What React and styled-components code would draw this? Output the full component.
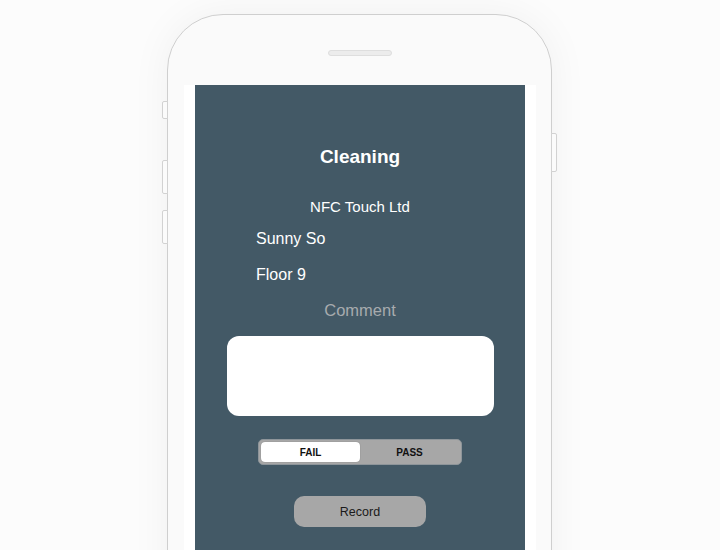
import React from "react";
import styled, { createGlobalStyle } from "styled-components";

const Global = createGlobalStyle`
  html, body { margin: 0; padding: 0; background: #fcfcfc; }
  body { font-family: "Liberation Sans", Arial, sans-serif; }
  * { box-sizing: border-box; }
`;

const Stage = styled.div`
  width: 720px;
  height: 550px;
  overflow: hidden;
  display: flex;
  justify-content: center;
  padding-top: 14px;
  background: #fcfcfc;
`;

const Phone = styled.div`
  position: relative;
  width: 385px;
  height: 800px;
  margin-left: -1px;
  flex-shrink: 0;
  background: #fafafa;
  border: 1px solid #cfcfcf;
  border-radius: 56px;
  box-shadow: 0 0 40px rgba(0, 0, 0, 0.05);
  display: flex;
  flex-direction: column;
  align-items: center;
`;

const SideButton = styled.div`
  position: absolute;
  top: ${(p) => p.$top}px;
  ${(p) => (p.$right ? "right: -6px;" : "left: -6px;")}
  width: 6px;
  height: ${(p) => p.$h}px;
  background: #fbfbfb;
  border: 1px solid #d2d2d2;
  border-radius: ${(p) => (p.$right ? "0 2px 2px 0" : "2px 0 0 2px")};
`;

const Speaker = styled.div`
  margin-top: 35px;
  width: 64px;
  height: 6px;
  border-radius: 3px;
  background: #ececec;
  border: 1px solid #dedede;
`;

const Screen = styled.div`
  margin-top: 29px;
  margin-left: 1px;
  width: 352px;
  flex: 1;
  background: #ffffff;
  display: flex;
  justify-content: center;
`;

const Panel = styled.div`
  width: 330px;
  background: #435966;
  display: flex;
  flex-direction: column;
  align-items: center;
  padding-top: 62px;
  color: #ffffff;
`;

const Title = styled.div`
  font-size: 19px;
  line-height: 20px;
  font-weight: 700;
`;

const Company = styled.div`
  margin-top: 31px;
  font-size: 15px;
  line-height: 18px;
`;

const Line = styled.div`
  align-self: stretch;
  padding-left: 61px;
  margin-top: ${(p) => p.$mt}px;
  font-size: 16px;
  line-height: 19px;
`;

const Label = styled.div`
  margin-top: 17px;
  font-size: 16.5px;
  line-height: 19px;
  color: #a7abae;
`;

const CommentBox = styled.div`
  margin-top: 16px;
  width: 267px;
  height: 80px;
  background: #ffffff;
  border-radius: 12px;
`;

const Segmented = styled.div`
  margin-top: 23px;
  width: 204px;
  height: 26px;
  padding: 2px;
  background: #a7a7a7;
  border: 1px solid #8e959a;
  border-radius: 5px;
  display: grid;
  grid-template-columns: 1fr 1fr;
`;

const Segment = styled.div`
  display: flex;
  align-items: center;
  justify-content: center;
  font-size: 10px;
  font-weight: 700;
  color: #111;
  border-radius: 4px;
  background: ${(p) => (p.$active ? "#ffffff" : "transparent")};
  box-shadow: ${(p) => (p.$active ? "0 0 1px rgba(0,0,0,0.4)" : "none")};
`;

const RecordButton = styled.div`
  margin-top: 31px;
  width: 132px;
  height: 31px;
  border-radius: 10px;
  background: #a7a7a7;
  display: flex;
  align-items: center;
  justify-content: center;
  font-size: 12.5px;
  color: #1a1a1a;
`;

export default function App() {
  return (
    <>
      <Global />
      <Stage>
        <Phone>
          <SideButton $top={86} $h={18} />
          <SideButton $top={145} $h={34} />
          <SideButton $top={195} $h={34} />
          <SideButton $right $top={118} $h={39} />
          <Speaker />
          <Screen>
            <Panel>
              <Title>Cleaning</Title>
              <Company>NFC Touch Ltd</Company>
              <Line $mt={13}>Sunny So</Line>
              <Line $mt={17}>Floor 9</Line>
              <Label>Comment</Label>
              <CommentBox />
              <Segmented>
                <Segment $active>FAIL</Segment>
                <Segment>PASS</Segment>
              </Segmented>
              <RecordButton>Record</RecordButton>
            </Panel>
          </Screen>
        </Phone>
      </Stage>
    </>
  );
}
